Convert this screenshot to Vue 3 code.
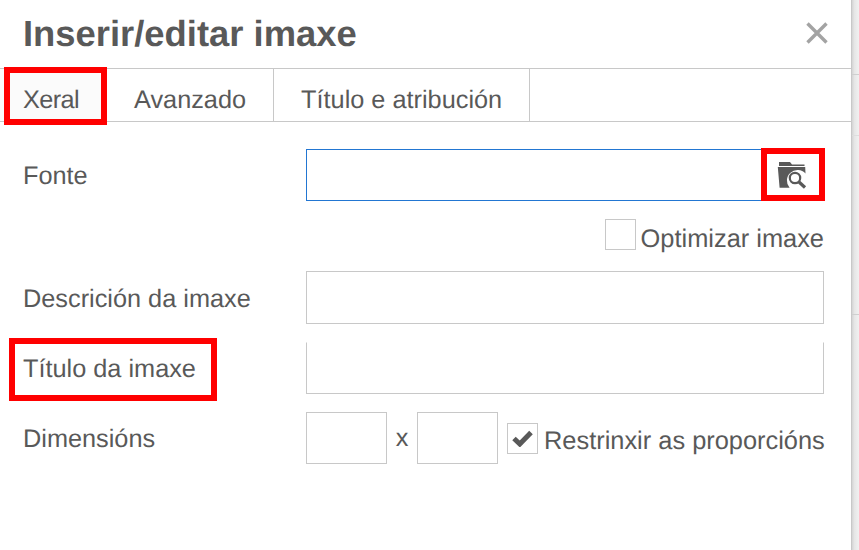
<template>
  <div class="page">
    <div class="dialog">
      <header class="head">
        <h1 class="title">Inserir/editar imaxe</h1>
        <svg class="close" viewBox="0 0 22 22" width="22" height="22">
          <path d="M1.5 1.5L20.5 20.5M20.5 1.5L1.5 20.5" stroke="#a3a3a3" stroke-width="3.4" fill="none" />
        </svg>
      </header>

      <nav class="tabs">
        <div v-for="tab in tabs" :key="tab" class="tab" :class="{ active: tab === 'Xeral' }">{{ tab }}</div>
      </nav>

      <form class="form">
        <div class="row">
          <label class="label">Fonte</label>
          <div class="source">
            <input class="input focus" type="text" />
            <svg class="folder" viewBox="0 0 30 28" width="30" height="28">
              <path d="M2 1h11l2 2.4h12.5V5H2z" fill="#595959" />
              <path d="M.8 6h27.4l.3 6.5A9.5 9.5 0 0 0 12.6 26.7H2.6z" fill="#595959" />
              <circle cx="18" cy="17" r="5.2" fill="none" stroke="#595959" stroke-width="2.2" />
              <path d="M22 21L28 26.5" stroke="#595959" stroke-width="3.2" />
            </svg>
            <span class="mark mark-icon"></span>
          </div>
        </div>

        <div class="optimize">
          <span class="check"></span>
          <span class="check-text">Optimizar imaxe</span>
        </div>

        <div class="row tall">
          <label class="label">Descrición da imaxe</label>
          <input class="input" type="text" />
        </div>

        <div class="row">
          <label class="label">Título da imaxe</label>
          <input class="input no-top" type="text" />
          <span class="mark mark-label"></span>
        </div>

        <div class="row">
          <label class="label">Dimensións</label>
          <input class="input small" type="text" />
          <span class="times">x</span>
          <input class="input small" type="text" />
          <span class="check ticked">
            <svg viewBox="0 0 21 17" width="21" height="17">
              <path d="M2 8.5L7.8 14L19 2.5" fill="none" stroke="#595959" stroke-width="5" />
            </svg>
          </span>
          <span class="check-text lower">Restrinxir as proporcións</span>
        </div>
      </form>

      <span class="mark mark-tab"></span>
    </div>

    <aside class="backdrop">
      <i class="line l1"></i>
      <i class="line l2"></i>
      <i class="line l3"></i>
    </aside>
  </div>
</template>

<script setup>
const tabs = ['Xeral', 'Avanzado', 'Título e atribución']
</script>

<style>
html, body { margin: 0; background: #fff; }
</style>

<style scoped>
.page {
  width: 859px;
  height: 550px;
  display: flex;
  overflow: hidden;
  font-family: "Liberation Sans", Arial, sans-serif;
  color: #595959;
  text-rendering: geometricPrecision;
}
.dialog {
  position: relative;
  width: 852px;
  flex: none;
  box-sizing: border-box;
  background: #fff;
  border-right: 1px solid #c8c8c8;
}
.backdrop {
  position: relative;
  flex: 1;
  background: linear-gradient(to right, #d4d4d4, #e6e6e6 35%, #f1f1f1);
}
.line {
  position: absolute;
  left: 0;
  right: 0;
  height: 1px;
  background: #cfcfcf;
}
.l1 { top: 74px; }
.l2 { top: 135px; background: #dedede; }
.l3 { top: 314px; }

.head {
  height: 68px;
  box-sizing: border-box;
  display: flex;
  align-items: center;
  justify-content: space-between;
  padding: 0 23px;
}
.title {
  margin: 0;
  font-size: 36.4px;
  font-weight: 700;
  line-height: 68px;
}
.close { display: block; margin-bottom: 3px; }

.tabs {
  display: flex;
  height: 52px;
  border-top: 1px solid #c8c8c8;
  border-bottom: 1px solid #c8c8c8;
}
.tab {
  box-sizing: border-box;
  height: 52px;
  padding: 0 27px;
  font-size: 25.3px;
  line-height: 62px;
  border-right: 1px solid #c8c8c8;
  white-space: nowrap;
}
.tab.active {
  width: 107px;
  padding: 0 0 0 23px;
  background: #fbfbfb;
  border-right: 0;
  letter-spacing: -0.6px;
}

.form {
  padding: 27px 27px 0 23px;
  display: flex;
  flex-direction: column;
}
.row {
  display: flex;
  align-items: center;
  height: 52px;
  margin-bottom: 18px;
  position: relative;
}
.row.tall { height: 53px; }
.label {
  width: 283px;
  flex: none;
  font-size: 25.3px;
  line-height: 52px;
  padding-top: 2px;
  white-space: nowrap;
}
.input {
  box-sizing: border-box;
  flex: 1;
  min-width: 0;
  height: 100%;
  padding: 0 8px;
  border: 1px solid #c8c8c8;
  background: #fff;
  outline: 0;
  border-radius: 0;
}
.input.focus { border-color: #2276d2; width: 100%; display: block; }
.input.no-top { border-top-color: #fff; }
.input.small { flex: none; width: 81px; }
.source {
  position: relative;
  flex: 1;
  height: 100%;
}
.folder {
  position: absolute;
  top: 12px;
  right: 17px;
}
.optimize {
  display: flex;
  align-items: center;
  justify-content: flex-end;
  height: 31px;
  margin-bottom: 21px;
}
.check {
  box-sizing: border-box;
  width: 31px;
  height: 31px;
  flex: none;
  border: 1px solid #c8c8c8;
  margin-right: 5px;
  display: flex;
  align-items: center;
  justify-content: center;
}
.check-text {
  flex: none;
  font-size: 25.4px;
  line-height: 38px;
  margin-top: 8px;
  white-space: nowrap;
}
.check-text.lower { margin-top: 6px; }
.times {
  flex: none;
  width: 30px;
  text-align: center;
  font-size: 25.3px;
}
.ticked { margin-left: 9px; margin-right: 6px; }

.mark {
  position: absolute;
  box-sizing: border-box;
  border: 6px solid #ff0000;
  pointer-events: none;
}
.mark-tab { left: 4px; top: 67px; width: 103px; height: 58px; }
.mark-icon { right: -1px; top: -1px; width: 64px; height: 53px; }
.mark-label { left: -14px; top: -4px; width: 208px; height: 63px; }
</style>
